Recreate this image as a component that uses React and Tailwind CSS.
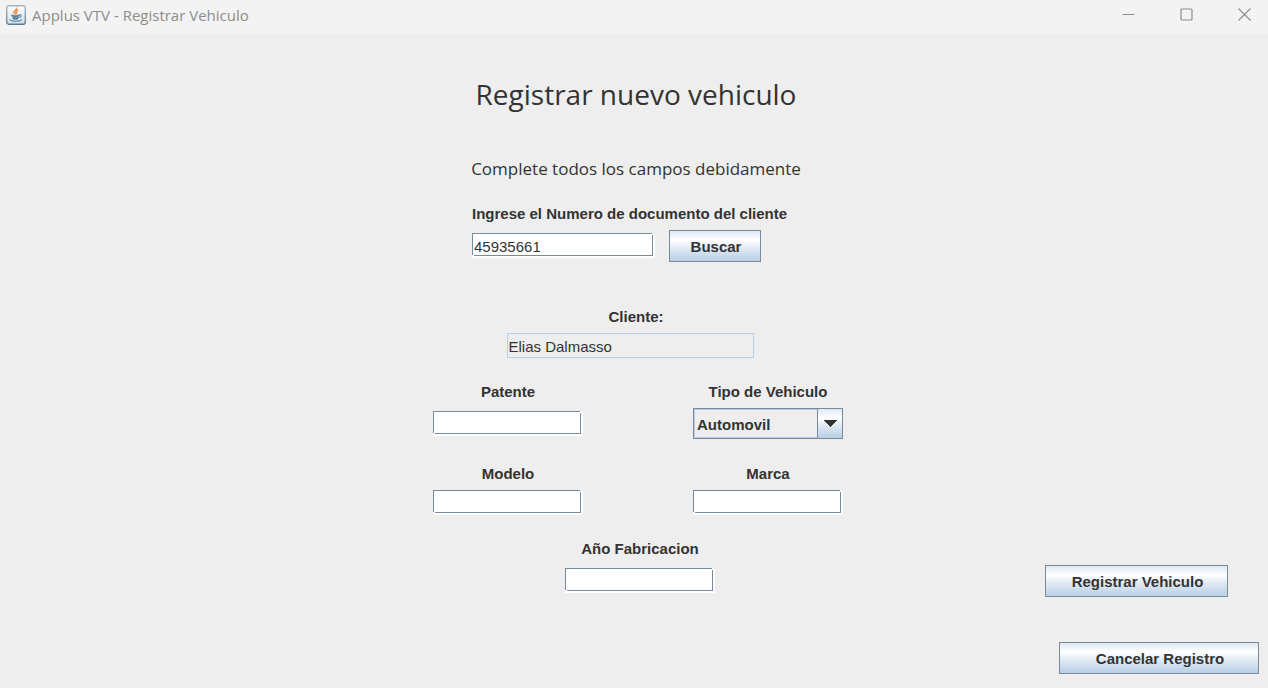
import React from "react";

const labelStyle = "block h-5 text-[15px] leading-5 font-bold whitespace-nowrap";

const inputStyle =
  "block h-[25px] pl-[2px] pt-[2px] text-[15px] leading-5 outline-none [background:linear-gradient(#7a8a99,#7a8a99)_0_0/calc(100%_-_3px)_1px_no-repeat,linear-gradient(#7a8a99,#7a8a99)_0_0/1px_calc(100%_-_3px)_no-repeat,linear-gradient(#7a8a99,#7a8a99)_right_2px_bottom_2px/1px_calc(100%_-_4px)_no-repeat,linear-gradient(#7a8a99,#7a8a99)_right_2px_bottom_2px/calc(100%_-_4px)_1px_no-repeat,linear-gradient(#eeeeee,#eeeeee)_right_top/3px_1px_no-repeat,#ffffff]";

const buttonStyle =
  "h-8 border border-[#7a8a99] bg-[linear-gradient(180deg,#dde8f3_0%,#ffffff_30%,#dde8f3_60%,#b8cfe5_100%)] pt-[2px] pl-[2px] text-[15px] leading-5 font-bold whitespace-nowrap";

function JavaIcon() {
  return (
    <svg width="20" height="20" viewBox="0 0 20 20" aria-hidden="true">
      <defs>
        <linearGradient id="tile" x1="0" y1="0" x2="0" y2="1">
          <stop offset="0" stopColor="#ffffff" />
          <stop offset="1" stopColor="#d5dee5" />
        </linearGradient>
        <linearGradient id="edge" x1="0" y1="0" x2="0" y2="1">
          <stop offset="0" stopColor="#a3b3bf" />
          <stop offset="1" stopColor="#557a94" />
        </linearGradient>
      </defs>
      <rect x="0.75" y="0.75" width="18.5" height="18.5" rx="2" fill="url(#tile)" stroke="url(#edge)" strokeWidth="1.3" />
      <g fill="none" strokeLinecap="round">
        <path d="M10.4 3.2c1.2 1.8-3 2.6-2.6 4.2.2.8 1.2 1 1.4 1.6M11.8 5.2c-2 .8-2.2 1.4-1.5 2.2.4.5.2 1-.3 1.4" stroke="#ee9147" strokeWidth="1.5" />
        <path d="M5.8 10.2c1.6.7 5.4.7 7.2 0M6.6 11.9c1.5.7 4.2.7 5.8 0M7.2 13.5c1.3.5 3.4.5 4.6 0" stroke="#5b86a5" strokeWidth="1.5" />
        <path d="M13.4 9.9c2.2-.6 2.2 1.7 0 2.6M4 15c2 1.7 9 1.7 11.4 0" stroke="#6c94b0" strokeWidth="1.3" />
      </g>
    </svg>
  );
}

function TitleBar() {
  return (
    <header className="flex h-[34px] items-start justify-between bg-[#f3f3f3] pl-1.5 text-[#8d8d8d]">
      <div className="flex items-center gap-1.5 pt-[5px]">
        <JavaIcon />
        <span className="font-['Open_Sans',sans-serif] text-[15px] leading-5">Applus VTV - Registrar Vehiculo</span>
      </div>
      <div className="flex gap-2.5">
        <button type="button" aria-label="Minimizar" className="flex h-[29px] w-12 items-center justify-center">
          <svg width="13" height="13" viewBox="0 0 13 13"><path d="M0.5 6.5h12" stroke="#8d8d8d" /></svg>
        </button>
        <button type="button" aria-label="Maximizar" className="flex h-[29px] w-12 items-center justify-center">
          <svg width="13" height="13" viewBox="0 0 13 13"><rect x="1" y="1" width="11" height="11" rx="1" fill="none" stroke="#8d8d8d" strokeWidth="1.2" /></svg>
        </button>
        <button type="button" aria-label="Cerrar" className="flex h-[29px] w-12 items-center justify-center">
          <svg width="13" height="13" viewBox="0 0 13 13"><path d="M0.5 0.5l12 12M12.5 0.5l-12 12" stroke="#8d8d8d" strokeWidth="1.1" /></svg>
        </button>
      </div>
    </header>
  );
}

function Field({ id, label }) {
  return (
    <div className="flex flex-col items-center gap-1.5">
      <label htmlFor={id} className={labelStyle}>{label}</label>
      <input id={id} type="text" className={`${inputStyle} w-[150px]`} />
    </div>
  );
}

export default function App() {
  return (
    <div className="flex min-h-screen flex-col bg-[#eeeeee] font-['Liberation_Sans',Arial,sans-serif] text-[#333333]">
      <TitleBar />
      <main className="grid flex-1 grid-cols-[1fr_410px_1fr] pl-2">
        <form className="col-start-2 flex flex-col pt-10" onSubmit={(e) => e.preventDefault()}>
          <div className="pr-1 text-center font-['Open_Sans',sans-serif] whitespace-nowrap">
            <h1 className="text-[28px] leading-10">Registrar nuevo vehiculo</h1>
            <p className="mt-[43px] text-[17px] leading-6">Complete todos los campos debidamente</p>
          </div>

          <div className="mt-[23px] pl-[39px]">
            <label htmlFor="documento" className={labelStyle}>Ingrese el Numero de documento del cliente</label>
            <div className="mt-1.5 flex items-center gap-[14px]">
              <input id="documento" type="text" defaultValue="45935661" className={`${inputStyle} mb-[2px] w-[183px]`} />
              <button type="button" className={`${buttonStyle} w-[92px]`}>Buscar</button>
            </div>
          </div>

          <div className="mt-[45px] flex flex-col items-center gap-1.5 pr-1">
            <label htmlFor="cliente" className={labelStyle}>Cliente:</label>
            <input
              id="cliente"
              type="text"
              readOnly
              defaultValue="Elias Dalmasso"
              className="mr-3 block h-[25px] w-[247px] border border-[#b8cfe5] bg-[#eeeeee] pt-[2px] pl-px text-[15px] leading-5 outline-none"
            />
          </div>

          <div className="mt-6 flex justify-between">
            <div className="flex flex-col items-center gap-[9px]">
              <label htmlFor="patente" className={labelStyle}>Patente</label>
              <input id="patente" type="text" className={`${inputStyle} w-[150px]`} />
            </div>
            <div className="flex flex-col items-center gap-1.5">
              <label htmlFor="tipo" className={labelStyle}>Tipo de Vehiculo</label>
              <div className="relative h-[31px] w-[150px] border border-[#7a8a99]">
                <select
                  id="tipo"
                  className="block h-full w-full appearance-none border border-[#b8cfe5] bg-[#eeeeee] pt-[2px] pl-[2px] text-[15px] leading-5 font-bold outline-none"
                >
                  <option>Automovil</option>
                </select>
                <span className="pointer-events-none absolute inset-y-0 right-0 flex w-[25px] items-center justify-center border-l border-[#7a8a99] bg-[linear-gradient(180deg,#dde8f3_0%,#ffffff_30%,#dde8f3_60%,#b8cfe5_100%)]">
                  <svg width="14" height="7" viewBox="0 0 14 7" shapeRendering="crispEdges"><path d="M0 0h14L7 7z" fill="#333333" /></svg>
                </span>
              </div>
            </div>
          </div>

          <div className="mt-[25px] flex justify-between">
            <Field id="modelo" label="Modelo" />
            <Field id="marca" label="Marca" />
          </div>

          <div className="mt-6 flex flex-col items-center gap-[9px] pl-1">
            <label htmlFor="anio" className={labelStyle}>Año Fabricacion</label>
            <input id="anio" type="text" className={`${inputStyle} w-[150px]`} />
          </div>
        </form>

        <div className="flex flex-col items-end justify-end gap-[45px] pr-[9px] pb-[14px]">
          <button type="button" className={`${buttonStyle} mr-[31px] w-[183px]`}>Registrar Vehiculo</button>
          <button type="button" className={`${buttonStyle} w-[200px]`}>Cancelar Registro</button>
        </div>
      </main>
    </div>
  );
}
